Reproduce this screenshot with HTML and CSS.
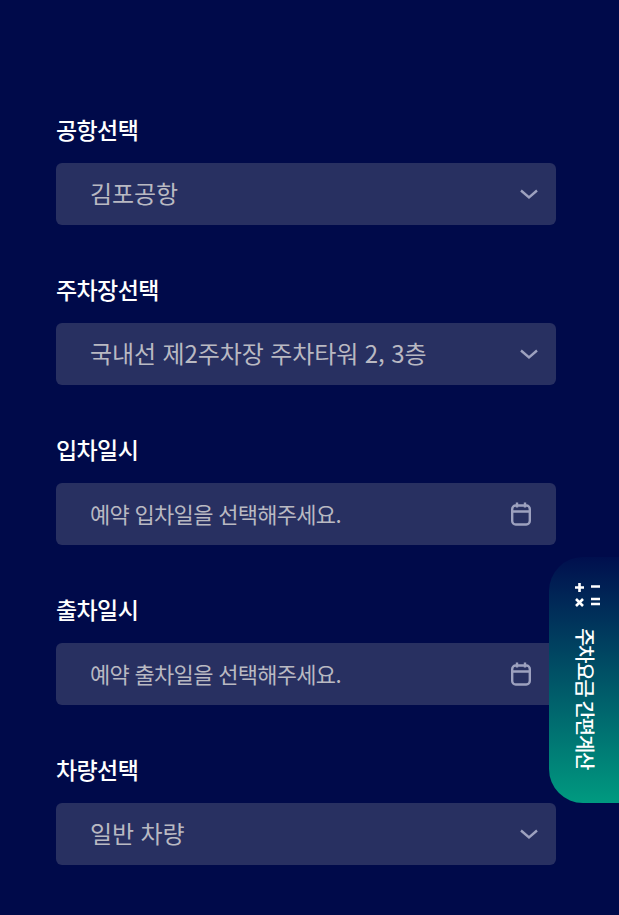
FILE: index.html
```html
<!DOCTYPE html>
<html lang="ko">
<head>
<meta charset="utf-8">
<title>주차요금 간편계산</title>
<link rel="stylesheet" href="styles.css">
</head>
<body>
<main class="form">
  <section class="group">
    <div class="label">공항선택</div>
    <div class="field"><span class="value">김포공항</span>
      <svg class="icon chev" viewBox="0 0 20 12"><path d="M2 2.5 10 9.500 18 2.500"/></svg></div>
  </section>
  <section class="group">
    <div class="label">주차장선택</div>
    <div class="field"><span class="value">국내선 제2주차장 주차타워 2, 3층</span>
      <svg class="icon chev" viewBox="0 0 20 12"><path d="M2 2.5 10 9.500 18 2.500"/></svg></div>
  </section>
  <section class="group">
    <div class="label">입차일시</div>
    <div class="field"><span class="value small">예약 입차일을 선택해주세요.</span>
      <svg class="icon cal" viewBox="0 0 20 24"><rect x="1.200" y="3.500" width="17.600" height="19" rx="3.500"/><path d="M1.200 9.500H18.800M6 0.500V5.500M14 0.500V5.500"/></svg></div>
  </section>
  <section class="group">
    <div class="label">출차일시</div>
    <div class="field"><span class="value small">예약 출차일을 선택해주세요.</span>
      <svg class="icon cal" viewBox="0 0 20 24"><rect x="1.200" y="3.500" width="17.600" height="19" rx="3.500"/><path d="M1.200 9.500H18.800M6 0.500V5.500M14 0.500V5.500"/></svg></div>
  </section>
  <section class="group">
    <div class="label">차량선택</div>
    <div class="field"><span class="value">일반 차량</span>
      <svg class="icon chev" viewBox="0 0 20 12"><path d="M2 2.5 10 9.500 18 2.500"/></svg></div>
  </section>
</main>
<aside class="calc">
  <svg class="calc-icon" viewBox="0 0 25 24"><path d="M0 4.500H9M4.500 0V9M16 3.500H25M1 16 8 23M8 16 1 23M16 16H25M16 21H25"/></svg>
  <span class="calc-text">주차요금 간편계산</span>
</aside>
</body>
</html>
```
FILE: styles.css
```css
* { box-sizing: border-box; }
html, body { margin: 0; height: 100%; }
body {
  position: relative;
  background: #000a4a;
  font-family: "Noto Sans CJK KR", "Noto Sans", sans-serif;
  overflow: hidden;
}
.form {
  display: flex;
  flex-direction: column;
  gap: 48px;
  width: 500px;
  margin-left: 56px;
  padding-top: 113px;
}
.group { display: flex; flex-direction: column; }
.label {
  display: flex;
  align-items: center;
  height: 50px;
  padding-bottom: 19px;
  color: #fff;
  font-size: 23px;
  font-weight: 500;
  letter-spacing: -0.6px;
}
.field {
  display: flex;
  align-items: center;
  justify-content: space-between;
  height: 62px;
  padding: 0 16px 0 34px;
  background: #283061;
  border-radius: 6px;
}
.value {
  margin-bottom: 4px;
  color: #b9b9c2;
  font-size: 24px;
  letter-spacing: -0.1px;
}
.value.small { margin-bottom: 2px; font-size: 22px; letter-spacing: -0.7px; }
.icon { fill: none; stroke: #9da1bf; stroke-width: 2.400; }
.chev { width: 20px; height: 12px; margin-right: 1px; }
.cal { width: 20px; height: 24px; margin-right: 9px; }
.calc {
  position: absolute;
  left: 549px;
  top: 557px;
  width: 70px;
  height: 246px;
  display: flex;
  flex-direction: column;
  align-items: center;
  gap: 21px;
  padding-top: 26px;
  border-radius: 34px 0 0 34px;
  background: linear-gradient(180deg, #000f4e 0%, #009a80 100%);
}
.calc-icon {
  width: 25px;
  height: 24px;
  margin-left: 7px;
  fill: none;
  stroke: #fff;
  stroke-width: 2.600;
}
.calc-text {
  margin-left: 2px;
  writing-mode: vertical-rl;
  text-orientation: sideways;
  color: #fff;
  font-size: 20px;
  font-weight: 500;
  letter-spacing: -1.300px;
  line-height: 24px;
  white-space: nowrap;
}
```
